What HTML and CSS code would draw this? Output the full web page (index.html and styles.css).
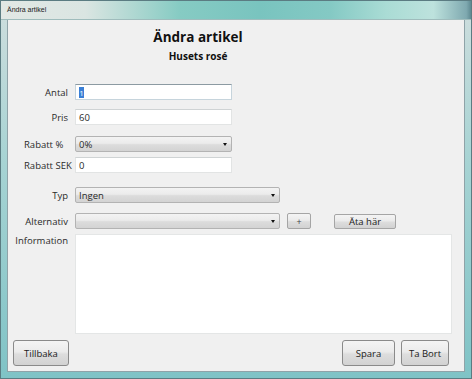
FILE: index.html
```html
<!DOCTYPE html>
<html>
<head>
<meta charset="utf-8">
<link rel="stylesheet" href="styles.css">
</head>
<body>
<div class="window">
  <div class="titlebar"><span class="title-text">Ändra artikel</span></div>
  <div class="frame-body">
    <div class="client">
      <div class="header">
        <div class="h1">Ändra artikel</div>
        <div class="h2">Husets rosé</div>
      </div>
      <div class="form">
        <div class="row r-antal">
          <div class="label">Antal</div>
          <div class="field input focus"><span class="sel">1</span></div>
        </div>
        <div class="row r-pris">
          <div class="label">Pris</div>
          <div class="field input">60</div>
        </div>
        <div class="row r-rabatt">
          <div class="label left">Rabatt %</div>
          <div class="field select">0%<span class="arrow"></span></div>
        </div>
        <div class="row r-sek">
          <div class="label left">Rabatt SEK</div>
          <div class="field input">0</div>
        </div>
        <div class="row r-typ">
          <div class="label">Typ</div>
          <div class="field select wide">Ingen<span class="arrow"></span></div>
        </div>
        <div class="row r-alt">
          <div class="label">Alternativ</div>
          <div class="field select wide"><span class="arrow"></span></div>
          <div class="btn plus">+</div>
          <div class="btn eat">Äta här</div>
        </div>
        <div class="row r-info">
          <div class="label top">Information</div>
          <div class="field textarea"></div>
        </div>
      </div>
      <div class="footer">
        <div class="btn big back">Tillbaka</div>
        <div class="spacer"></div>
        <div class="btn big save">Spara</div>
        <div class="btn big del">Ta Bort</div>
      </div>
    </div>
  </div>
</div>
</body>
</html>
```
FILE: styles.css
```css
* { box-sizing: border-box; }
html, body { margin: 0; padding: 0; }
body {
  width: 472px;
  height: 379px;
  overflow: hidden;
  font-family: "Open Sans", "Liberation Sans", sans-serif;
  font-size: 9.5px;
  color: #2a2a2a;
}
.window {
  width: 472px;
  height: 379px;
  display: flex;
  flex-direction: column;
  background: linear-gradient(180deg, #cfdede 0%, #a9d4d4 40%, #7fc3c6 100%);
  border: 1px solid #5b7c82;
}
.titlebar {
  height: 19px;
  flex: none;
  background: linear-gradient(90deg, #e2e8e5 0%, #dae5e2 18%, #b0d8d2 28%, #86cbc3 38%, #79c4bf 55%, #84c9c4 70%, #aadcd5 82%, #bde2dd 92%, #7fa9b0 99%, #5f8a92 100%);
  border-bottom: 1px solid #9fbcbc;
}
.title-text {
  font-family: "Liberation Sans", sans-serif;
  font-size: 7px;
  color: #222;
  line-height: 18px;
  padding-left: 6px;
}
.frame-body {
  flex: 1;
  padding: 0 6px 6px 6px;
  display: flex;
}
.client {
  flex: 1;
  background: #f0f0f0;
  border: 1px solid #8fa3a8;
  border-top: none;
  display: flex;
  flex-direction: column;
}
.header {
  width: 380px;
  text-align: center;
  padding-top: 8px;
}
.h1 {
  font-weight: bold;
  font-size: 13.5px;
  line-height: 18px;
  color: #111;
}
.h2 {
  font-weight: bold;
  font-size: 10px;
  line-height: 14px;
  margin-top: 3px;
  color: #111;
}
.form {
  display: flex;
  flex-direction: column;
}
.row {
  display: flex;
  align-items: center;
  height: 16px;
}
.r-antal { margin-top: 21px; }
.r-pris { margin-top: 9px; }
.r-rabatt { margin-top: 11px; }
.r-sek { margin-top: 5px; }
.r-typ { margin-top: 14px; }
.r-alt { margin-top: 10px; }
.r-info { margin-top: 5px; height: 100px; align-items: flex-start; }
.label {
  width: 60px;
  margin-right: 7px;
  text-align: right;
  white-space: nowrap;
  flex: none;
}
.label.left {
  text-align: left;
  padding-left: 16px;
}
.label.top { line-height: 14px; }
.field {
  height: 16px;
  width: 157px;
  flex: none;
  line-height: 15px;
  padding-left: 3px;
  white-space: nowrap;
}
.input {
  background: #fff;
  border: 1px solid #e2e4e4;
  border-top-color: #cfd3d4;
}
.input.focus {
  border: 1px solid #c6d4dc;
  border-top-color: #8c9aa2;
}
.sel {
  display: inline-block;
  background: #3a7fd6;
  color: #fff;
  width: 5px;
  height: 11px;
  line-height: 11px;
  vertical-align: middle;
  margin-top: -2px;
  text-align: center;
  font-size: 8px;
}
.select {
  position: relative;
  background: linear-gradient(180deg, #f3f3f3 0%, #ebebeb 45%, #dcdcdc 55%, #d3d3d3 100%);
  border: 1px solid #b3b3b3;
  border-radius: 2px;
}
.select.wide { width: 205px; }
.arrow {
  position: absolute;
  right: 4px;
  top: 6px;
  width: 0;
  height: 0;
  border-left: 2.5px solid transparent;
  border-right: 2.5px solid transparent;
  border-top: 3px solid #111;
}
.textarea {
  width: 377px;
  height: 100px;
  background: #fff;
  border: 1px solid #e4e6e6;
}
.btn {
  flex: none;
  display: flex;
  align-items: center;
  justify-content: center;
  background: linear-gradient(180deg, #f4f4f4 0%, #ebebeb 45%, #dddddd 55%, #d2d2d2 100%);
  border: 1px solid #a5a5a5;
  border-radius: 2px;
  color: #1a1a1a;
  white-space: nowrap;
}
.plus { width: 24px; height: 16px; margin-left: 7px; font-size: 9px; color: #444; }
.eat { width: 62px; height: 15px; margin-left: 23px; }
.footer {
  display: flex;
  margin-top: 6px;
  padding: 0 15px 0 5px;
}
.spacer { flex: 1; }
.big { height: 26px; border-color: #8a8a8a; border-radius: 3px; }
.back { width: 56px; }
.save { width: 53px; }
.del { width: 48px; margin-left: 6px; }
```
